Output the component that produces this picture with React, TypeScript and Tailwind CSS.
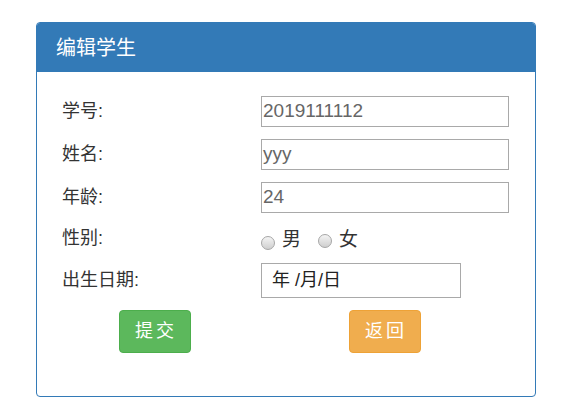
import React from "react";

const font = { fontFamily: '"Liberation Sans", "Noto Sans CJK SC", sans-serif' };

function Radio({ label, drop = false }: { label: string; drop?: boolean }) {
  return (
    <span className="flex items-center">
      <span
        className={`inline-block h-[14px] w-[14px] rounded-full border border-[#a6a6a6] bg-gradient-to-b from-[#f4f4f4] to-[#cfcfcf] ${drop ? "mt-[5px]" : "mt-[1px]"}`}
      />
      <span className="ml-[7px] text-[19px] text-[#333]">{label}</span>
    </span>
  );
}

function Field({ value }: { value: string }) {
  return (
    <div className="flex h-[31px] w-[248px] items-center border border-[#a9a9a9] pl-[1px] text-[19px] text-[#666]">
      {value}
    </div>
  );
}

export default function App() {
  const rows = [
    { label: "学号:", value: "2019111112" },
    { label: "姓名:", value: "yyy" },
    { label: "年龄:", value: "24" },
  ];

  return (
    <div className="h-[418px] w-[578px] bg-white pt-[22px] pl-[36px]" style={font}>
      <div className="h-[375px] w-[500px] overflow-hidden rounded-[4px] border border-[#337ab7]">
        <div className="flex h-[49px] items-center bg-[#337ab7] pl-[19px] text-[20px] text-white">编辑学生</div>

        <div className="pt-[24px] pl-[25px] text-[18px] text-[#333]">
          {rows.map((r, i) => (
            <div key={r.label} className={`flex h-[31px] items-center ${i > 0 ? "mt-[12px]" : ""}`}>
              <div className="w-[199px]">{r.label}</div>
              <Field value={r.value} />
            </div>
          ))}

          <div className="mt-[12px] flex h-[31px] items-center">
            <div className="w-[199px] -translate-y-[2px]">性别:</div>
            <div className="flex items-center gap-[17px]">
              <Radio label="男" drop />
              <Radio label="女" />
            </div>
          </div>

          <div className="mt-[7px] flex h-[35px] items-center">
            <div className="w-[199px]">出生日期:</div>
            <div className="flex h-[35px] w-[200px] items-center border border-[#a9a9a9] pl-[10px] text-[18px] text-[#222]">
              年 /月/日
            </div>
          </div>

          <div className="mt-[12px] flex">
            <div className="w-[287px] pl-[57px]">
              <button className="h-[43px] w-[72px] rounded-[4px] border border-[#4cae4c] bg-[#5cb85c] pl-[2px] text-[18px] tracking-[3px] text-white">
                提交
              </button>
            </div>
            <button className="h-[43px] w-[72px] rounded-[4px] border border-[#eea236] bg-[#f0ad4e] pl-[2px] text-[18px] tracking-[3px] text-white">
              返回
            </button>
          </div>
        </div>
      </div>
    </div>
  );
}
